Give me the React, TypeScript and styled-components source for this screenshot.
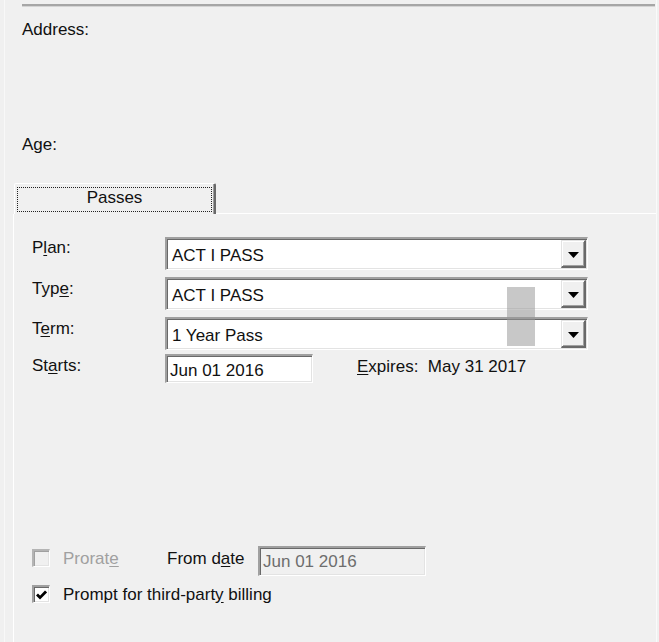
import React from "react";
import styled, { createGlobalStyle } from "styled-components";

const Global = createGlobalStyle`
  html, body { margin: 0; padding: 0; background: #f0f0f0; }
  body { font-family: "Liberation Sans", Arial, sans-serif; }
`;

const Window = styled.div`
  position: relative;
  width: 659px;
  height: 642px;
  overflow: hidden;
  background: #f0f0f0;
  font-family: "Liberation Sans", Arial, sans-serif;
  font-size: 17px;
  line-height: 20px;
  color: #111;
`;

const Frame = styled.div`
  box-sizing: border-box;
  margin-left: 4px;
  width: 653px;
  height: 642px;
  border-left: 1px solid #f8f8f8;
  border-right: 1px solid #fafafa;
  display: flex;
  flex-direction: column;
`;

const TopRule = styled.div`
  box-sizing: border-box;
  margin: 4px 1px 0 17px;
  height: 3px;
  border-top: 2px solid #a6a6a6;
  border-bottom: 1px solid #d4d4d4;
`;

const Header = styled.div`
  display: flex;
  flex-direction: column;
  gap: 95px;
  padding: 13px 0 0 17px;
`;

const TabStrip = styled.div`
  display: flex;
  align-items: flex-end;
  margin-top: 28px;
  height: 31px;
`;

const Tab = styled.div`
  box-sizing: border-box;
  margin-left: 9px;
  width: 202px;
  height: 31px;
  padding: 3px 2px 2px 2px;
  border-style: solid;
  border-width: 1px 2px 0 1px;
  border-color: #fff #696969 transparent #fff;
  box-shadow: inset -1px 0 0 #a0a0a0;
  border-radius: 2px 2px 0 0;
  background: #f0f0f0;
`;

const FocusRing = styled.div`
  box-sizing: border-box;
  height: 25px;
  border: 1px dotted #222;
  padding-bottom: 3px;
  text-align: center;
`;

const TabFill = styled.div`
  flex: 1;
  height: 1px;
  background: #fff;
`;

const TabPanel = styled.div`
  flex: 1;
  margin-left: 8px;
  border-left: 1px solid #fff;
  padding: 23px 0 0 18px;
  display: flex;
  flex-direction: column;
`;

const FieldRow = styled.div<{ $gap?: number }>`
  display: flex;
  align-items: flex-start;
  margin-top: ${(p) => p.$gap ?? 0}px;
`;

const Label = styled.div<{ $top?: number }>`
  width: 133px;
  flex: none;
  margin-top: ${(p) => p.$top ?? 0}px;
`;

const Mn = styled.span`
  text-decoration: underline;
  text-underline-offset: 2px;
`;

const Sunken = styled.div`
  box-sizing: border-box;
  border-style: solid;
  border-width: 2px 1px 1px 2px;
  border-color: #a0a0a0 #fff #fff #a0a0a0;
  box-shadow: inset 1px 1px 0 #696969, inset -1px -1px 0 #e3e3e3;
`;

const Combo = styled(Sunken)`
  width: 423px;
  height: 33px;
  display: flex;
  align-items: stretch;
  background: #fff;
`;

const ComboText = styled.div`
  flex: 1;
  padding: 7px 0 0 5px;
  white-space: nowrap;
`;

const DropButton = styled.div`
  box-sizing: border-box;
  width: 25px;
  margin: 1px 1px 1px 0;
  padding: 2px 0 0 1px;
  background: #f0f0f0;
  border-style: solid;
  border-width: 1px 2px 2px 1px;
  border-color: #e3e3e3 #696969 #696969 #e3e3e3;
  box-shadow: inset 1px 1px 0 #fff, inset -1px -1px 0 #a0a0a0;
  display: flex;
  align-items: center;
  justify-content: center;
`;

const TextBox = styled(Sunken)<{ $width: number; $height: number; $disabled?: boolean }>`
  width: ${(p) => p.$width}px;
  height: ${(p) => p.$height}px;
  flex: none;
  padding: ${(p) => (p.$disabled ? "4px 0 0 3px" : "5px 0 0 3px")};
  background: ${(p) => (p.$disabled ? "#f0f0f0" : "#fff")};
  color: ${(p) => (p.$disabled ? "#6d6d6d" : "#111")};
  white-space: nowrap;
`;

const Expires = styled.div`
  margin: 3px 0 0 44px;
`;

const Options = styled.div`
  margin-top: 163px;
  display: flex;
  flex-direction: column;
  gap: 9px;
`;

const OptionRow = styled.div`
  display: flex;
  align-items: flex-start;
`;

const CheckOption = styled.div<{ $width?: number; $disabled?: boolean; $top?: number }>`
  display: flex;
  align-items: flex-start;
  flex: none;
  width: ${(p) => (p.$width ? `${p.$width}px` : "auto")};
  margin-top: ${(p) => p.$top ?? 0}px;
  color: ${(p) => (p.$disabled ? "#a0a0a0" : "#111")};
  white-space: nowrap;
`;

const CheckBox = styled(Sunken)<{ $disabled?: boolean }>`
  width: 18px;
  height: 18px;
  flex: none;
  margin-right: 13px;
  background: ${(p) => (p.$disabled ? "#f0f0f0" : "#fff")};
  border-color: ${(p) =>
    p.$disabled ? "#b4b4b4 #fff #fff #b4b4b4" : "#a0a0a0 #fff #fff #a0a0a0"};
  box-shadow: ${(p) =>
    p.$disabled
      ? "inset 1px 1px 0 #a0a0a0, inset -1px -1px 0 #e3e3e3"
      : "inset 1px 1px 0 #696969, inset -1px -1px 0 #e3e3e3"};
  display: flex;
  align-items: center;
  justify-content: center;
`;

const DateLabel = styled.div`
  width: 91px;
  flex: none;
  margin-top: 3px;
`;

const Overlay = styled.div`
  position: absolute;
  left: 507px;
  top: 287px;
  width: 28px;
  height: 59px;
  background: rgba(150, 150, 150, 0.52);
  pointer-events: none;
`;

const Arrow = () => (
  <svg width="11" height="6" viewBox="0 0 11 6">
    <polygon points="0,0 11,0 5.5,6" fill="#000" />
  </svg>
);

const Check = () => (
  <svg width="11" height="10" viewBox="0 0 11 10">
    <path d="M1 4.6 L4 7.6 L10 1.4" fill="none" stroke="#000" strokeWidth="2.8" />
  </svg>
);

const ComboBox = ({ value }: { value: string }) => (
  <Combo>
    <ComboText>{value}</ComboText>
    <DropButton>
      <Arrow />
    </DropButton>
  </Combo>
);

export default function App() {
  return (
    <>
      <Global />
      <Window>
        <Frame>
          <TopRule />
          <Header>
            <div>Address:</div>
            <div>Age:</div>
          </Header>
          <TabStrip>
            <Tab>
              <FocusRing>Passes</FocusRing>
            </Tab>
            <TabFill />
          </TabStrip>
          <TabPanel>
            <FieldRow>
              <Label $top={1}>
                P<Mn>l</Mn>an:
              </Label>
              <ComboBox value="ACT I PASS" />
            </FieldRow>
            <FieldRow $gap={7}>
              <Label $top={2}>
                Typ<Mn>e</Mn>:
              </Label>
              <ComboBox value="ACT I PASS" />
            </FieldRow>
            <FieldRow $gap={7}>
              <Label $top={2}>
                T<Mn>e</Mn>rm:
              </Label>
              <ComboBox value="1 Year Pass" />
            </FieldRow>
            <FieldRow $gap={4}>
              <Label $top={2}>
                St<Mn>a</Mn>rts:
              </Label>
              <TextBox $width={148} $height={29}>
                Jun 01 2016
              </TextBox>
              <Expires>
                <Mn>E</Mn>xpires:&nbsp; May 31 2017
              </Expires>
            </FieldRow>
            <Options>
              <OptionRow>
                <CheckOption $width={135} $disabled $top={3}>
                  <CheckBox $disabled />
                  <span>
                    Prorat<Mn>e</Mn>
                  </span>
                </CheckOption>
                <DateLabel>
                  From d<Mn>a</Mn>te
                </DateLabel>
                <TextBox $width={168} $height={30} $disabled>
                  Jun 01 2016
                </TextBox>
              </OptionRow>
              <OptionRow>
                <CheckOption>
                  <CheckBox>
                    <Check />
                  </CheckBox>
                  <span>
                    Prompt for third-part<Mn>y</Mn> billing
                  </span>
                </CheckOption>
              </OptionRow>
            </Options>
          </TabPanel>
        </Frame>
        <Overlay />
      </Window>
    </>
  );
}
